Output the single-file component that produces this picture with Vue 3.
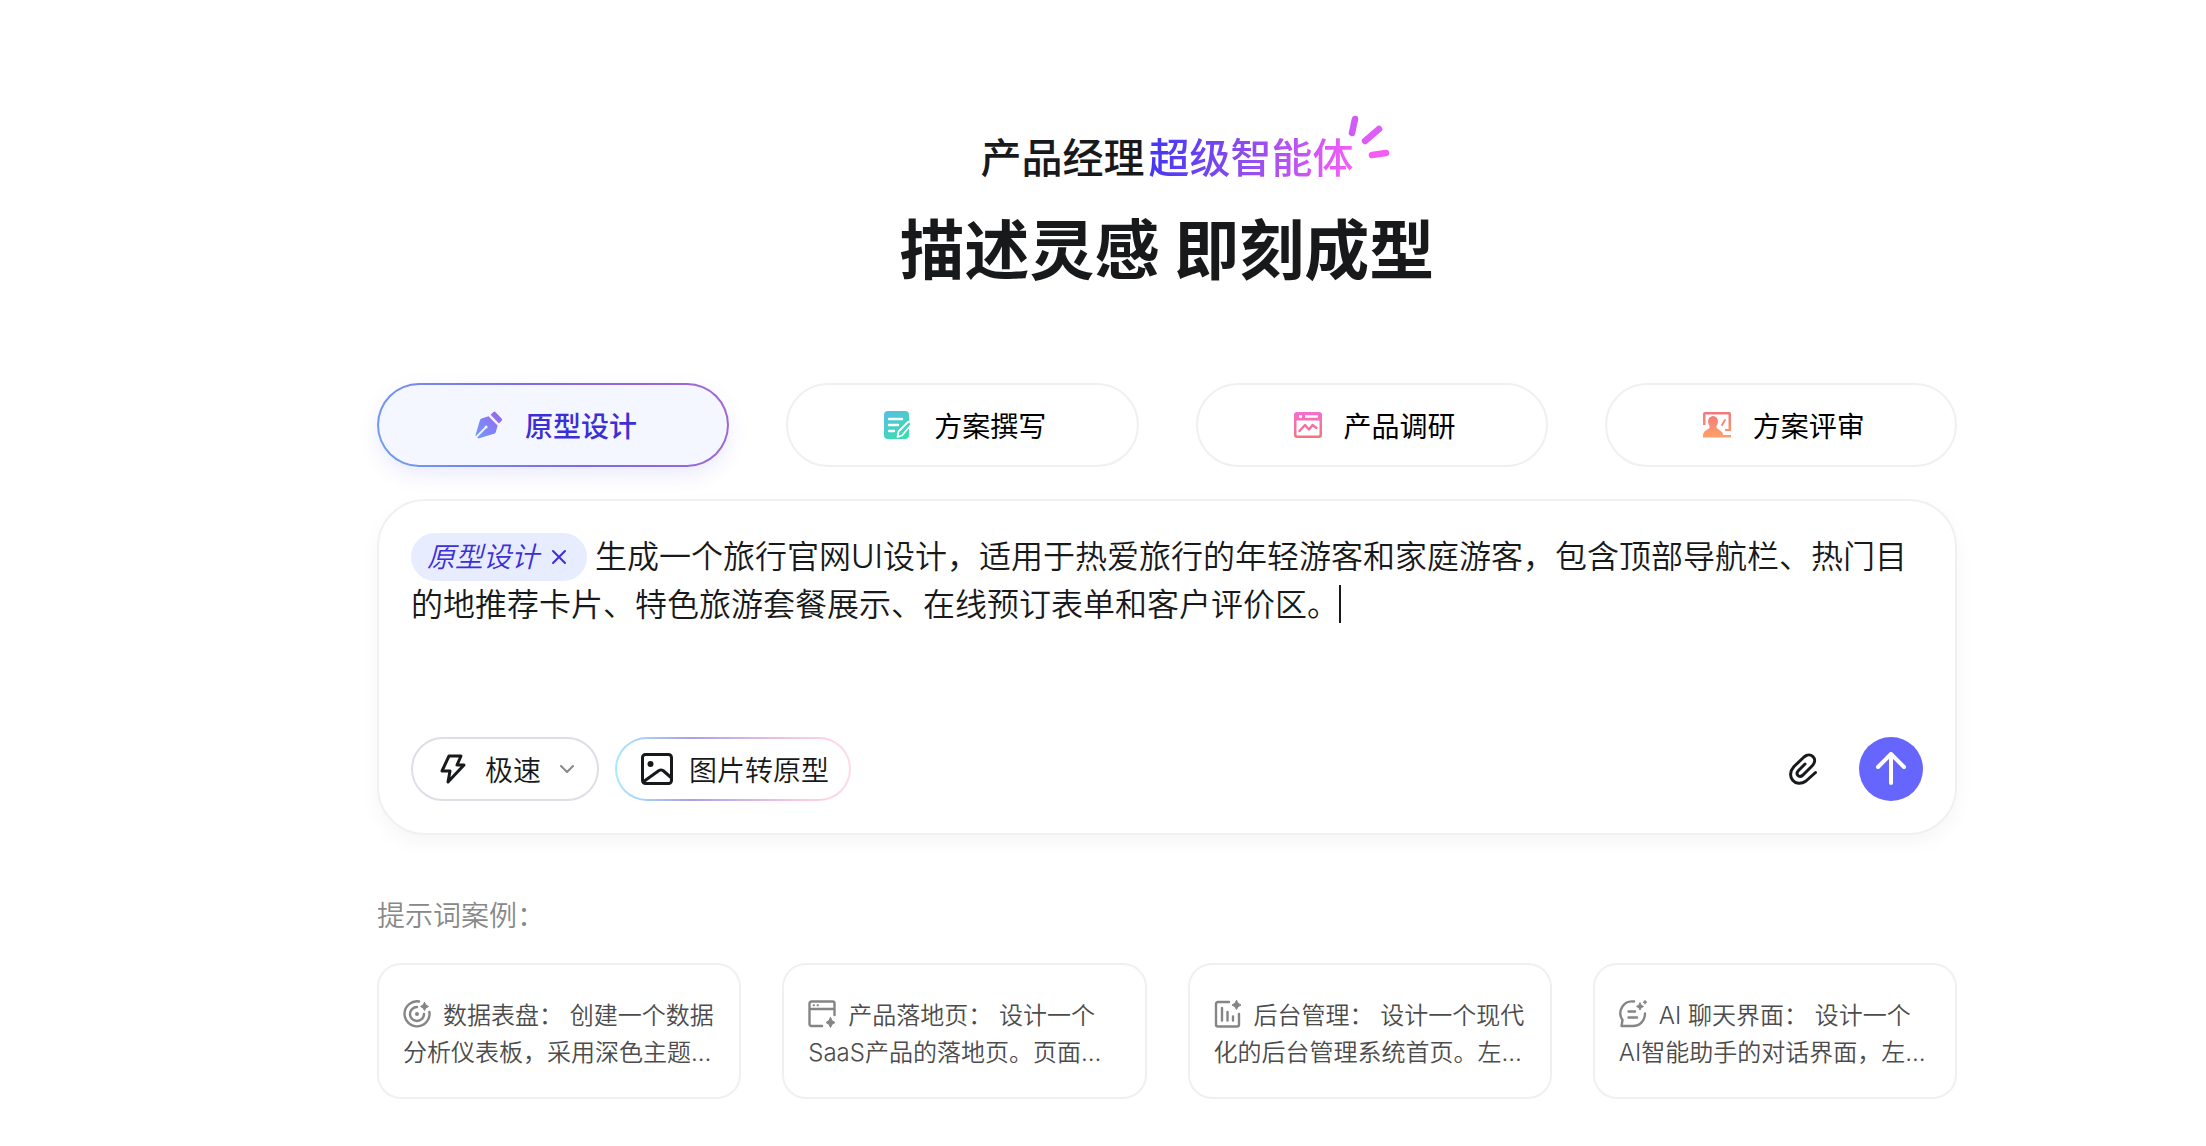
<script setup>
import { ref } from 'vue';

const tabs = [
    { id: 'design', label: '原型设计' },
    { id: 'write', label: '方案撰写' },
    { id: 'research', label: '产品调研' },
    { id: 'review', label: '方案评审' }
];

const examples = [
    { id: 'dashboard', title: '数据表盘：', text: '创建一个数据分析仪表板，采用深色主题…' },
    { id: 'landing', title: '产品落地页：', text: '设计一个SaaS产品的落地页。页面…' },
    { id: 'admin', title: '后台管理：', text: '设计一个现代化的后台管理系统首页。左…' },
    { id: 'chat', title: 'AI 聊天界面：', text: '设计一个AI智能助手的对话界面，左…' }
];

const activeTab = ref('design');
const showTag = ref(true);

const selectTab = (id) => {
    activeTab.value = id;
    showTag.value = true;
};
</script>

<template>
    <main class="page">
        <header class="hero">
            <p class="subtitle">
                <span>产品经理</span>
                <span class="highlight">超级智能体</span>
                <svg class="spark" viewBox="0 0 42 44" fill="none" stroke-linecap="round" stroke-width="6.500">
                    <path d="M7 4L4 18" stroke="#cf5cf5" />
                    <path d="M31 14L17 26" stroke="#df5cf6" />
                    <path d="M38 38L24 40" stroke="#f55cf2" />
                </svg>
            </p>
            <h1>描述灵感 即刻成型</h1>
        </header>

        <nav class="tabs">
            <button v-for="tab in tabs" :key="tab.id" type="button" class="tab"
                :class="{ active: activeTab === tab.id }" @click="selectTab(tab.id)">
                <svg v-if="tab.id === 'design'" class="tab-icon" viewBox="0 0 28 28">
                    <defs>
                        <linearGradient id="g-design" x1="1" y1="0" x2="0" y2="1">
                            <stop offset="0" stop-color="#9a63ea" />
                            <stop offset="1" stop-color="#6f9dff" />
                        </linearGradient>
                    </defs>
                    <path fill="url(#g-design)"
                        d="M18.2 1.2Q19.4 0 20.6 1.2L26.6 7.4Q27.8 8.6 26.6 9.8L24 12.4L15.6 3.8ZM13.500 5.200L22.6 14.4L20.8 21Q20.4 22.4 19 22.8L3.400 27.600L2.200 26.400L11 17.600A1.500 1.500 0 1 0 9.600 16.200L1 25L0.400 24.400L5 9Q5.400 7.800 6.600 7.400Z" />
                </svg>
                <svg v-else-if="tab.id === 'write'" class="tab-icon" viewBox="0 0 28 28">
                    <defs>
                        <linearGradient id="g-write" x1="0" y1="0" x2="0.6" y2="1">
                            <stop offset="0" stop-color="#58bdea" />
                            <stop offset="1" stop-color="#3cdcae" />
                        </linearGradient>
                    </defs>
                    <rect width="25" height="28" rx="4" fill="url(#g-write)" />
                    <path d="M5 8h13M5 14h9M5 20h5" stroke="#fff" stroke-width="2.400" stroke-linecap="round" />
                    <path d="M26.500 11.500q1.500 1.500 0 3L18 24.500l-4.500 1.500l1-5.500L23.500 11.500q1.500-1.500 3 0z"
                        fill="#45d3bb" stroke="#fff" stroke-width="1.800" stroke-linejoin="round" />
                </svg>
                <svg v-else-if="tab.id === 'research'" class="tab-icon" viewBox="0 0 28 28">
                    <defs>
                        <linearGradient id="g-research" x1="0" y1="0" x2="0" y2="1">
                            <stop offset="0" stop-color="#f36fd0" />
                            <stop offset="1" stop-color="#f5747c" />
                        </linearGradient>
                    </defs>
                    <path fill="url(#g-research)" fill-rule="evenodd"
                        d="M3 1H25Q28 1 28 4V24Q28 27 25 27H3Q0 27 0 24V4Q0 1 3 1ZM2.500 9.500V23.500Q2.500 24.500 3.500 24.500H24.500Q25.500 24.500 25.500 23.500V9.500ZM5 4.200V6.800H8V4.200ZM11 4.200V6.800H24V4.200Z" />
                    <path d="M5.500 20L11 14L15 18.500L18.500 14L22.500 17" fill="none" stroke="#f470a0"
                        stroke-width="2.400" stroke-linecap="round" stroke-linejoin="round" />
                </svg>
                <svg v-else class="tab-icon" viewBox="0 0 28 28">
                    <defs>
                        <linearGradient id="g-review" x1="0" y1="0" x2="0" y2="1">
                            <stop offset="0" stop-color="#f0787e" />
                            <stop offset="1" stop-color="#ff9f68" />
                        </linearGradient>
                    </defs>
                    <path fill="url(#g-review)" fill-rule="evenodd"
                        d="M2 1H26Q28 1 28 3V20H22V18H25.500V3.500H2.500V14H0V3Q0 1 2 1ZM10 5A5 5.500 0 0 1 15 10.500Q15 13 13.500 15V17L19 21Q20 22 20 24H28V26.500H0V24Q0 22 1.500 20.500L6.500 17V15Q5 13 5 10.500A5 5.500 0 0 1 10 5Z" />
                    <path d="M19 14L22 9" stroke="#f58878" stroke-width="2" stroke-linecap="round" />
                </svg>
                <span>{{ tab.label }}</span>
            </button>
        </nav>

        <section class="composer">
            <div class="prompt" contenteditable="true" role="textbox" aria-label="提示词" spellcheck="false"><span
                    v-if="showTag" class="tag" contenteditable="false"><em>原型设计</em><button type="button"
                        class="tag-close" aria-label="移除" @click="showTag = false"><svg viewBox="0 0 16 16" fill="none"
                            stroke="currentColor" stroke-width="2" stroke-linecap="round">
                            <path d="M2 2L14 14M14 2L2 14" />
                        </svg></button></span>生成一个旅行官网UI设计，适用于热爱旅行的年轻游客和家庭游客，包含顶部导航栏、热门目的地推荐卡片、特色旅游套餐展示、在线预订表单和客户评价区。<span
                    class="caret"></span></div>

            <div class="toolbar">
                <button type="button" class="pill speed">
                    <svg class="bolt" viewBox="0 0 26 30" fill="none" stroke="currentColor" stroke-width="3"
                        stroke-linejoin="round">
                        <path d="M9 2H21L17 11H24L8 28L10 17H2Z" />
                    </svg>
                    <span>极速</span>
                    <svg class="chevron" viewBox="0 0 14 8" fill="none" stroke="#8a8a8e" stroke-width="2"
                        stroke-linecap="round" stroke-linejoin="round">
                        <path d="M1 1L7 7L13 1" />
                    </svg>
                </button>
                <button type="button" class="pill image">
                    <svg class="picture" viewBox="0 0 32 32" fill="none" stroke="currentColor" stroke-width="3"
                        stroke-linejoin="round">
                        <rect x="1.500" y="1.500" width="29" height="29" rx="3" />
                        <path d="M2 29L18 17.500Q20 16.500 22 17.500L30 24.500" />
                        <circle cx="9.500" cy="11" r="3" fill="currentColor" stroke="none" />
                    </svg>
                    <span>图片转原型</span>
                </button>
                <button type="button" class="attach" aria-label="添加附件">
                    <svg viewBox="0 0 28 32" fill="none" stroke="currentColor" stroke-width="3" stroke-linecap="round"
                        stroke-linejoin="round">
                        <path d="M16 11L9.500 17.500C6 21.500 10 25.500 14 22L23.500 12.500C29.500 5.500 21.500 -1.500 15 4L5 13.500C-4 23.500 6.500 35.500 17 28L26.500 19.500" />
                    </svg>
                </button>
                <button type="button" class="send" aria-label="发送">
                    <svg viewBox="0 0 30 34" fill="none" stroke="#fff" stroke-width="4" stroke-linecap="round"
                        stroke-linejoin="round">
                        <path d="M15 31V3M2 15L15 2L28 15" />
                    </svg>
                </button>
            </div>
        </section>

        <section class="examples">
            <h2>提示词案例：</h2>
            <div class="cards">
                <button v-for="item in examples" :key="item.id" type="button" class="card">
                    <svg v-if="item.id === 'dashboard'" class="card-icon" viewBox="0 0 28 28" fill="none"
                        stroke="#858585" stroke-width="2.400" stroke-linecap="round">
                        <path d="M16 1.500A12.500 12.500 0 1 0 26.400 12" />
                        <path d="M14 7A7 7 0 1 0 21 14" />
                        <circle cx="14" cy="14" r="2" fill="#858585" stroke="none" />
                        <path d="M21.500 2.500Q22.300 5.700 25.500 6.500Q22.300 7.300 21.500 10.500Q20.700 7.300 17.500 6.500Q20.700 5.700 21.500 2.500Z"
                            fill="#858585" stroke-width="1" />
                    </svg>
                    <svg v-else-if="item.id === 'landing'" class="card-icon" viewBox="0 0 28 28" fill="none"
                        stroke="#858585" stroke-width="2.400" stroke-linecap="round">
                        <path d="M14 26H3.500Q1.500 26 1.500 24V3.500Q1.500 1.500 3.500 1.500H24.500Q26.500 1.500 26.500 3.500V15M2 9H26" />
                        <path d="M5.500 5.300H6M9.500 5.300H10" stroke-width="2" />
                        <path d="M22.500 17.500Q23.500 21.500 27 22.500Q23.500 23.500 22.500 27.500Q21.500 23.500 18 22.500Q21.500 21.500 22.500 17.500Z"
                            fill="#858585" stroke-width="1" />
                    </svg>
                    <svg v-else-if="item.id === 'admin'" class="card-icon" viewBox="0 0 28 28" fill="none"
                        stroke="#858585" stroke-width="2.400" stroke-linecap="round">
                        <path d="M15 2H4Q2 2 2 4V24.500Q2 26.500 4 26.500H23Q25 26.500 25 24.500V14" />
                        <path d="M8 8V20.500M13.500 12V20.500M19 16.500V20.500" />
                        <path d="M22.500 0.500Q23.500 4 27 5Q23.500 6 22.500 9.500Q21.500 6 18 5Q21.500 4 22.500 0.500Z"
                            fill="#858585" stroke-width="1" />
                    </svg>
                    <svg v-else class="card-icon" viewBox="0 0 28 28" fill="none" stroke="#858585" stroke-width="2.400"
                        stroke-linecap="round" stroke-linejoin="round">
                        <path d="M15 1.500C4 0 -2 12 3.500 20L2.500 26H14C21 26 26 20.500 26 13.500" />
                        <path d="M9.500 11.500H16M9.500 17.500H18" />
                        <path d="M21 3Q21.600 5.900 24.500 6.500Q21.600 7.100 21 10Q20.400 7.100 17.500 6.500Q20.400 5.900 21 3Z"
                            fill="#858585" stroke-width="1" />
                        <path d="M26 0.700V3.700M24.500 2.200H27.500" stroke-width="1.500" />
                    </svg>{{ item.title }} {{ item.text }}
                </button>
            </div>
        </section>
    </main>
</template>

<style>
body {
    margin: 0;
    background: #fff;
}
</style>

<style scoped>
.page {
    box-sizing: border-box;
    padding: 127px 249px 48px 377px;
    font-family: Inter, "Noto Sans CJK SC", sans-serif;
    font-weight: 350;
    color: #18191b;
}

button {
    font: inherit;
    color: inherit;
    background: none;
    border: none;
    margin: 0;
    padding: 0;
    cursor: pointer;
}

svg {
    display: block;
    flex: none;
}

.hero {
    display: flex;
    flex-direction: column;
    align-items: center;
    font-family: "Noto Sans CJK SC", sans-serif;
}

.subtitle {
    position: relative;
    display: flex;
    gap: 4px;
    margin: 0;
    font-size: 41px;
    line-height: 56px;
    font-weight: 500;
}

.highlight {
    color: transparent;
    background: linear-gradient(100deg, #3f35f5 0%, #9b50ee 55%, #f35cf8 95%);
    background-clip: text;
}

.spark {
    position: absolute;
    left: 100%;
    top: -12px;
    margin-left: -6px;
    width: 42px;
    height: 44px;
}

h1 {
    margin: 17px 0 0;
    font-size: 65px;
    line-height: 92px;
    font-weight: 600;
}

.tabs {
    display: grid;
    grid-template-columns: repeat(4, 1fr);
    gap: 57px;
    margin-top: 91px;
}

.tab {
    display: flex;
    align-items: center;
    justify-content: center;
    gap: 22px;
    height: 84px;
    padding-left: 6px;
    border: 2px solid #f0f0f0;
    border-radius: 42px;
    font-size: 28px;
    font-weight: 400;
    color: #000;
}

.tab.active {
    color: #3c2fd6;
    font-weight: 500;
    border-color: transparent;
    background: linear-gradient(#f4f7ff, #f4f7ff) padding-box,
        linear-gradient(60deg, #6fa0f0, #7d6be6 50%, #a566cf) border-box;
    box-shadow: 0 8px 20px rgba(90, 90, 240, 0.12);
}

.tab-icon {
    width: 28px;
    height: 28px;
}

.composer {
    display: flex;
    flex-direction: column;
    justify-content: space-between;
    box-sizing: border-box;
    min-height: 336px;
    margin-top: 32px;
    padding: 32px;
    border: 2px solid #f0f0f2;
    border-radius: 48px;
    box-shadow: 0 8px 20px rgba(0, 0, 0, 0.04);
}

.prompt {
    font-size: 32px;
    line-height: 48px;
    outline: none;
}

.tag {
    display: inline-flex;
    align-items: center;
    gap: 12px;
    box-sizing: border-box;
    height: 48px;
    margin-right: 8px;
    padding: 0 20px 0 16px;
    border-radius: 24px;
    background: #e8ecff;
    color: #3c2fd6;
    font-size: 28px;
    vertical-align: top;
}

.tag-close svg {
    width: 16px;
    height: 16px;
}

.caret {
    display: inline-block;
    width: 2px;
    height: 38px;
    background: #18191b;
    vertical-align: -7px;
}

.toolbar {
    display: flex;
    align-items: center;
    gap: 16px;
}

.pill {
    display: flex;
    align-items: center;
    box-sizing: border-box;
    height: 64px;
    border: 2px solid #dedfe6;
    border-radius: 32px;
    font-size: 28px;
}

.speed {
    gap: 19px;
    padding: 0 23px 0 27px;
}

.image {
    gap: 16px;
    padding: 0 20px 0 24px;
    border-color: transparent;
    background: linear-gradient(#fff, #fff) padding-box,
        linear-gradient(90deg, #a8ebff, #aaa0e8 32%, #f4c6e2 76%, #ffdbe9) border-box;
}

.bolt {
    width: 26px;
    height: 30px;
}

.chevron {
    width: 14px;
    height: 8px;
}

.picture {
    width: 32px;
    height: 32px;
}

.attach {
    margin-left: auto;
    padding: 8px 10px;
}

.attach svg {
    width: 28px;
    height: 32px;
}

.send {
    display: grid;
    place-items: center;
    width: 64px;
    height: 64px;
    margin-left: 16px;
    border-radius: 50%;
    background: #6666ff;
}

.send svg {
    width: 30px;
    height: 34px;
}

h2 {
    margin: 60px 0 26px;
    font-size: 28px;
    line-height: 42px;
    font-weight: 350;
    color: #888;
}

.cards {
    display: grid;
    grid-template-columns: repeat(4, 1fr);
    gap: 41px;
}

.card {
    padding: 32px 24px 26px;
    border: 2px solid #f0f0f0;
    border-radius: 24px;
    font-size: 24px;
    line-height: 37px;
    text-align: left;
    color: #4c4c4c;
}

.card-icon {
    display: inline-block;
    width: 28px;
    height: 28px;
    margin-right: 12px;
    vertical-align: -4px;
}
</style>
